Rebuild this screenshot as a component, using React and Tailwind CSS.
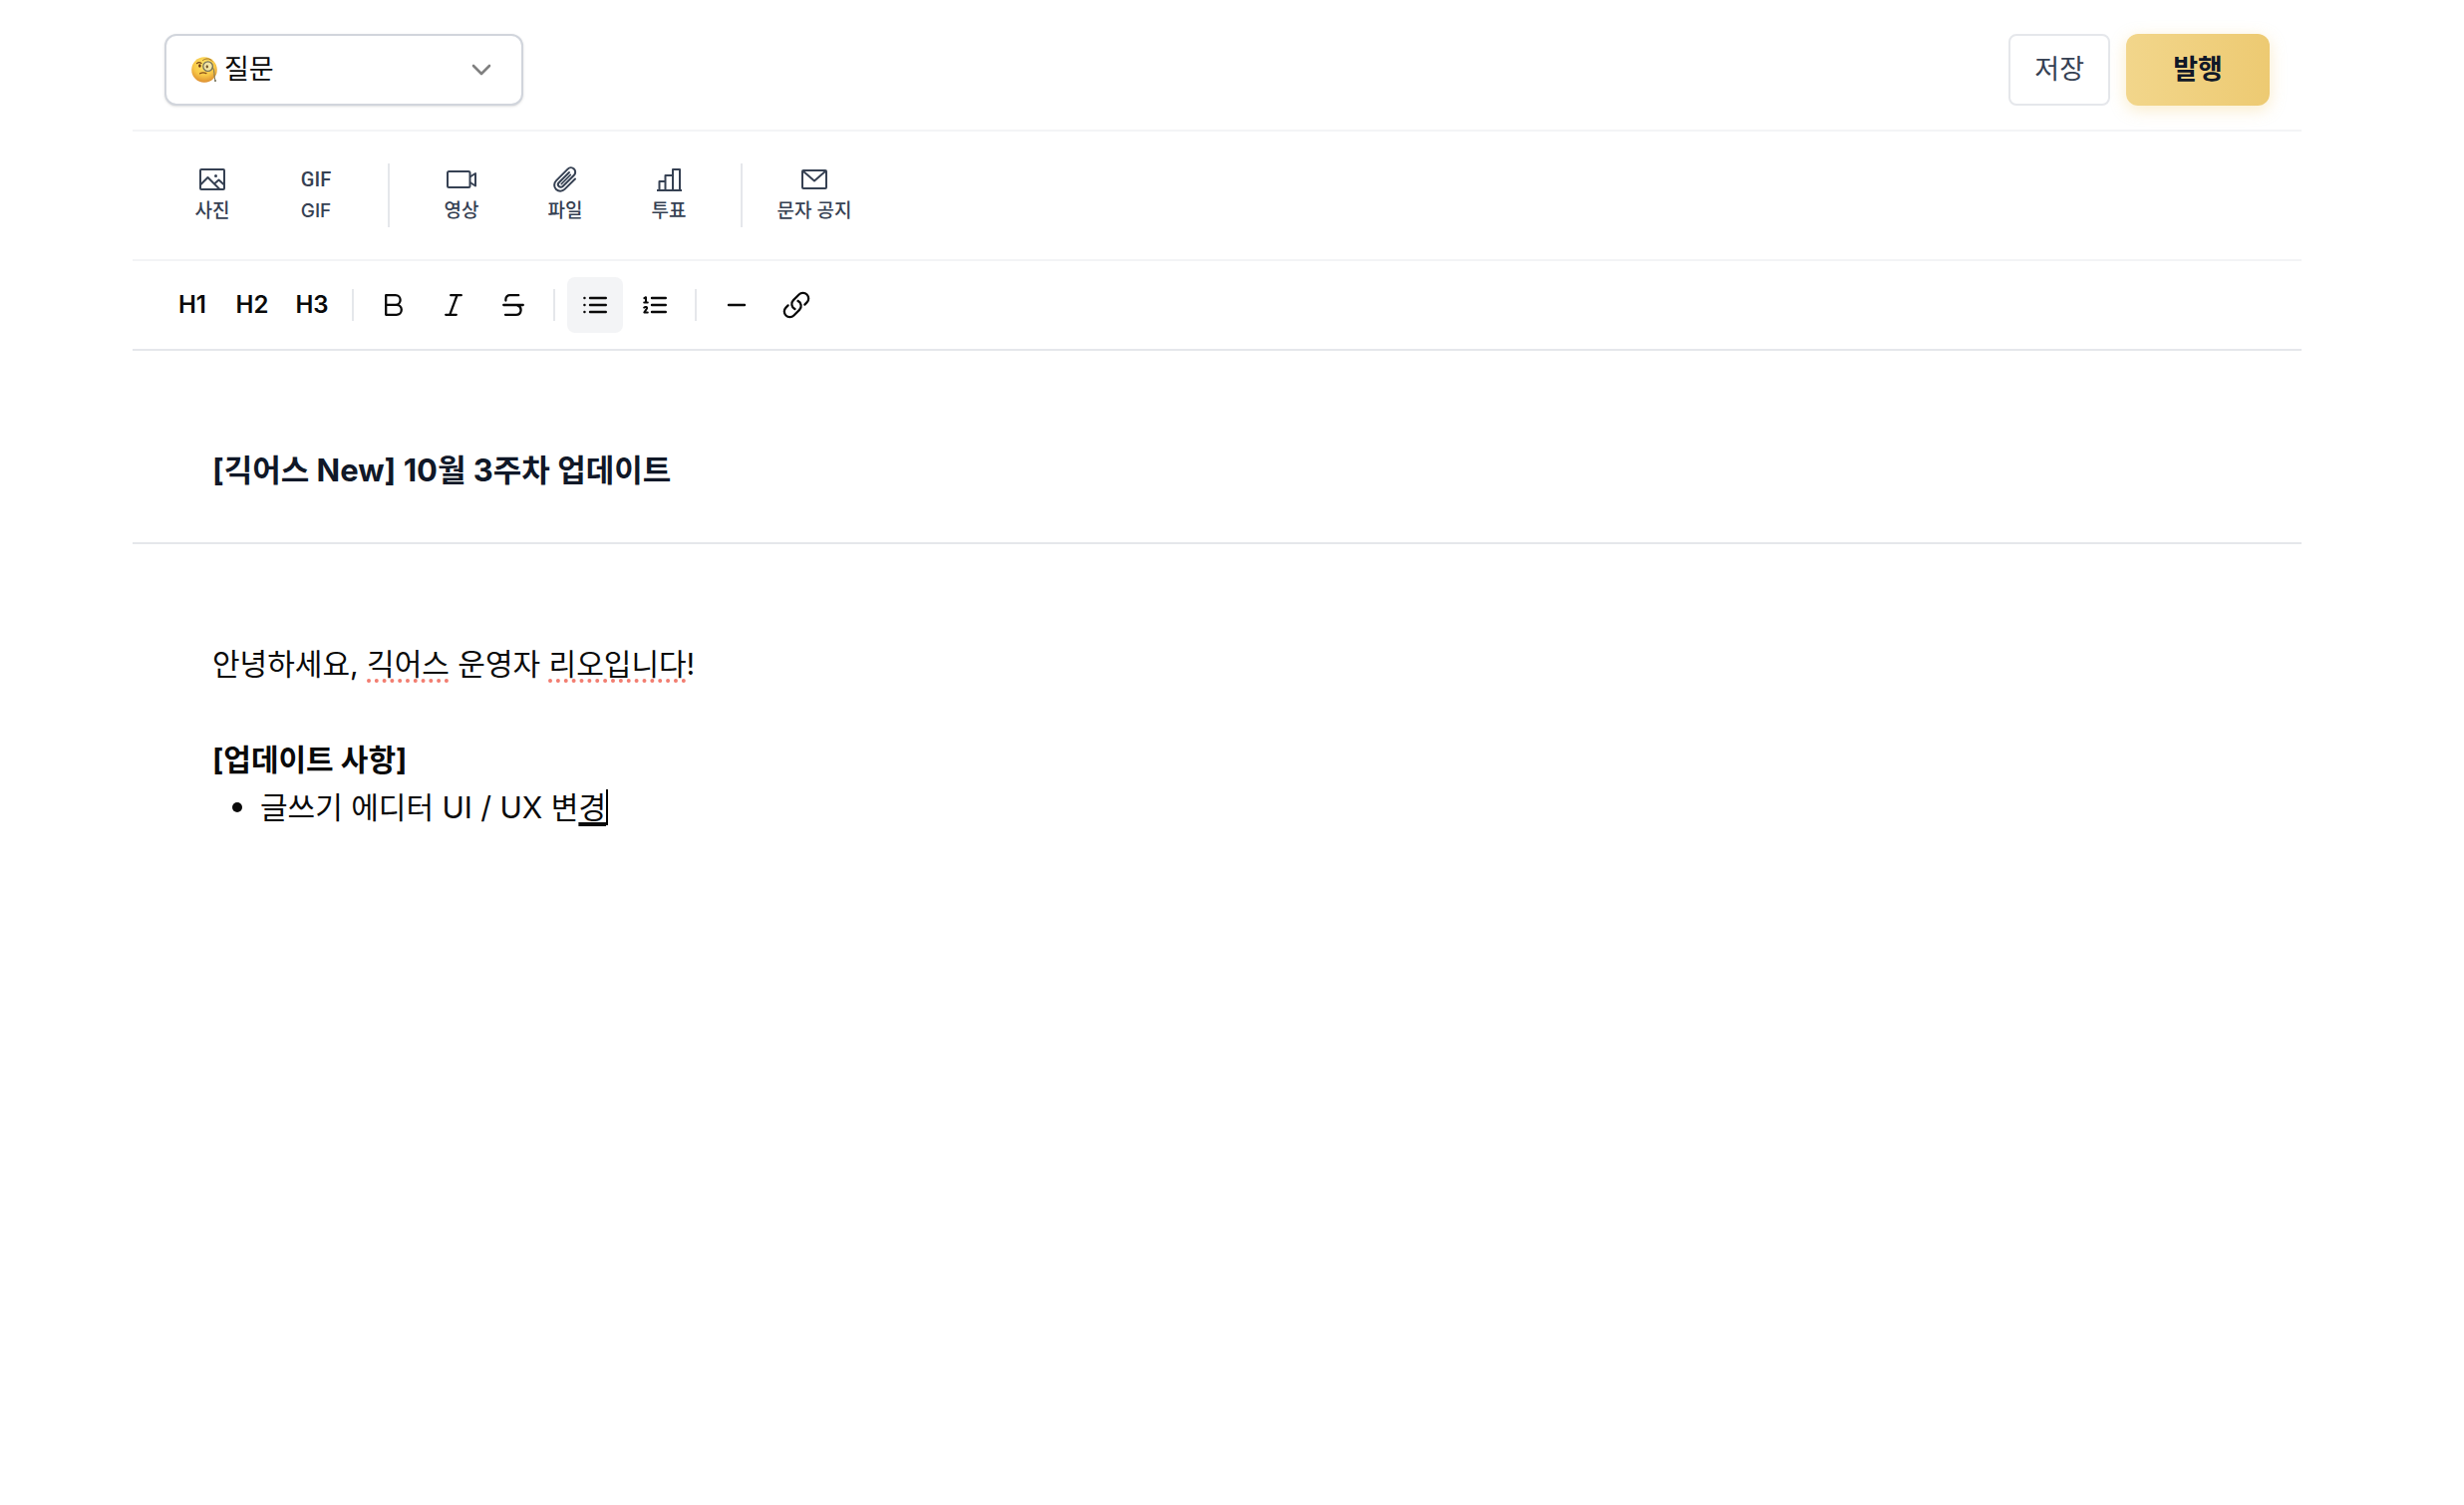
import { useState } from 'react'

const PhotoIcon = () => (
  <svg width="26" height="22" viewBox="0 0 26 22" fill="none" stroke="currentColor" strokeWidth="2" strokeLinejoin="round">
    <rect x="1" y="1" width="24" height="20" rx="1" />
    <path d="M1 16.5 8.5 9 20.5 21M15 15.5l4.5-4 5.5 5" />
    <circle cx="16.5" cy="7.5" r="1.5" fill="currentColor" stroke="none" />
  </svg>
)

const GifIcon = () => (
  <span aria-hidden="true" className="font-[Roboto,sans-serif] text-xl leading-6 font-medium">
    GIF
  </span>
)

const VideoIcon = () => (
  <svg width="30" height="18" viewBox="0 0 30 18" fill="none" stroke="currentColor" strokeWidth="2" strokeLinejoin="round">
    <rect x="1" y="1" width="22.5" height="16" rx="1.5" />
    <path d="M23.5 6.5 29 3v12.5l-5.5-3.5" />
  </svg>
)

const ClipIcon = () => (
  <svg width="24" height="26" viewBox="0 0 24 26" fill="none" stroke="currentColor" strokeWidth="2" strokeLinecap="round">
    <path d="M22 12.5 11.5 22.9a6 6 0 0 1-8.6-8.5L14.6 2.6a4.4 4.4 0 0 1 6.3 6.2L9.6 20a2.7 2.7 0 0 1-3.9-3.8L16 6" />
    <path d="m8.2 17.6 9.2-9.2" strokeWidth="1.5" />
  </svg>
)

const PollIcon = () => (
  <svg width="25" height="23" viewBox="0 0 25 23" fill="none" stroke="currentColor" strokeWidth="2" strokeLinejoin="round">
    <path d="M0 22h25M2.5 22v-9H8.5M8.5 22V7H16M16 22V1h7v21" />
  </svg>
)

const MailIcon = () => (
  <svg width="26" height="20" viewBox="0 0 26 20" fill="none" stroke="currentColor" strokeWidth="2" strokeLinejoin="round">
    <rect x="1" y="1" width="24" height="18" rx="1" />
    <path d="m1.5 1.5 11.5 10 11.5-10" />
  </svg>
)

const BoldIcon = () => (
  <svg width="18" height="22" viewBox="0 0 18 22" fill="none" stroke="currentColor" strokeWidth="2.3" strokeLinejoin="round">
    <path d="M1.2 1.2h9.6a4.8 4.8 0 0 1 0 9.6H1.2zM1.2 10.8h10.6a5 5 0 0 1 0 10H1.2z" />
  </svg>
)

const ItalicIcon = () => (
  <svg width="18" height="22" viewBox="0 0 18 22" fill="none" stroke="currentColor" strokeWidth="2.3" strokeLinecap="round">
    <path d="M6.2 1.2H16.8M1.2 20.8h10.6M12.6 1.2 5.2 20.8" />
  </svg>
)

const StrikeIcon = () => (
  <svg width="22" height="22" viewBox="0 0 22 22" fill="none" stroke="currentColor" strokeWidth="2.3" strokeLinecap="round">
    <path d="M16.2 1.2H7.4a4 4 0 0 0-4 4v1.4M1.2 11h19.6M15 11.4c5.2 1.4 4.6 9.4-1.2 9.4H3" />
  </svg>
)

const BulletListIcon = () => (
  <svg width="24" height="18" viewBox="0 0 24 18" fill="none" stroke="currentColor" strokeWidth="2.4" strokeLinecap="round">
    <path d="M7 2h15.8M7 9h15.8M7 16h15.8M1.4 2h.1M1.4 9h.1M1.4 16h.1" />
  </svg>
)

const OrderedListIcon = () => (
  <svg width="24" height="18" viewBox="0 0 24 18" fill="none" stroke="currentColor" strokeWidth="2.4" strokeLinecap="round">
    <path d="M9 2h13.8M9 9h13.8M9 16h13.8" />
    <path d="M1.4 2.2 3 1.2v5.4M1.2 6.6h3.6M1.2 11.6c1-1.2 3.4-.8 2.8.9L1.4 16.4h3.4" strokeWidth="2" strokeLinejoin="round" />
  </svg>
)

const LineIcon = () => (
  <svg width="20" height="4" viewBox="0 0 20 4" stroke="currentColor" strokeWidth="2.4" strokeLinecap="round">
    <path d="M2 2h16" />
  </svg>
)

const LinkIcon = () => (
  <svg width="30" height="30" viewBox="0 0 24 24" fill="none" stroke="currentColor" strokeWidth="1.8" strokeLinecap="round">
    <path d="M13.19 8.688a4.5 4.5 0 0 1 1.242 7.244l-4.5 4.5a4.5 4.5 0 0 1-6.364-6.364l1.757-1.757m13.35-.622 1.757-1.757a4.5 4.5 0 0 0-6.364-6.364l-4.5 4.5a4.5 4.5 0 0 0 1.242 7.244" />
  </svg>
)

const MonocleIcon = () => (
  <svg width="26" height="26" viewBox="0 0 26 26" fill="none">
    <defs>
      <radialGradient id="face" cx="0.5" cy="0.3" r="0.7">
        <stop offset="0" stopColor="#fde66a" />
        <stop offset="0.6" stopColor="#f8c848" />
        <stop offset="1" stopColor="#de8f30" />
      </radialGradient>
    </defs>
    <circle cx="13" cy="13" r="12.8" fill="url(#face)" />
    <path d="M5.5 6.6c1.3-1.2 3.2-1.2 4.6-.2" stroke="#7a4516" strokeWidth="1.2" strokeLinecap="round" />
    <path d="M11.5 3.6c2.6-2.4 7-2.4 9.4.6" stroke="#9a6420" strokeWidth="0.9" strokeLinecap="round" />
    <ellipse cx="8.4" cy="9" rx="1.3" ry="1.7" fill="#68300f" />
    <circle cx="16.6" cy="9.6" r="4.8" fill="#f3e6a5" stroke="#77745c" strokeWidth="1.3" />
    <ellipse cx="15.8" cy="9.8" rx="1.2" ry="1.6" fill="#75562a" />
    <path d="M8.6 16.8c2-1.3 4.4-1.2 6.4-.2" stroke="#8a5018" strokeWidth="1.2" strokeLinecap="round" />
    <path d="M21.4 10.5c2.6 3.5.6 8 2.6 13.5" stroke="#77745c" strokeWidth="1" strokeLinecap="round" />
    <circle cx="24" cy="24" r="1" fill="#77745c" />
  </svg>
)

const insertGroups = [
  [
    { label: '사진', icon: PhotoIcon },
    { label: 'GIF', icon: GifIcon },
  ],
  [
    { label: '영상', icon: VideoIcon },
    { label: '파일', icon: ClipIcon },
    { label: '투표', icon: PollIcon },
  ],
  [{ label: '문자 공지', icon: MailIcon }],
]

const formatGroups = [
  [
    { name: 'H1', text: 'H1' },
    { name: 'H2', text: 'H2' },
    { name: 'H3', text: 'H3' },
  ],
  [
    { name: '굵게', icon: BoldIcon },
    { name: '기울임', icon: ItalicIcon },
    { name: '취소선', icon: StrikeIcon },
  ],
  [
    { name: '글머리 기호', icon: BulletListIcon },
    { name: '번호 목록', icon: OrderedListIcon },
  ],
  [
    { name: '구분선', icon: LineIcon },
    { name: '링크', icon: LinkIcon },
  ],
]

const InsertButton = ({ label, icon: Icon }) => (
  <button type="button" className="flex w-24 flex-col items-center gap-1 pb-1 text-gray-700">
    <span className="flex h-8 items-center justify-center">
      <Icon />
    </span>
    <span className="text-[19px] leading-6 font-medium whitespace-nowrap">{label}</span>
  </button>
)

const FormatButton = ({ name, text, icon: Icon, active, onClick }) => (
  <button
    type="button"
    aria-label={name}
    aria-pressed={active}
    onClick={onClick}
    className={`flex size-14 items-center justify-center rounded-lg text-2xl font-semibold ${active ? 'bg-gray-100' : ''}`}
  >
    {text || <Icon />}
  </button>
)

const Header = () => (
  <header className="flex items-center justify-between border-b-2 border-gray-100 px-8 py-6">
    <div className="relative">
      <select
        aria-label="게시판"
        className="h-18 w-[360px] appearance-none rounded-xl border-2 border-gray-300 bg-white pr-16 pl-[58px] text-[27px] shadow-sm"
      >
        <option>질문</option>
      </select>
      <span className="pointer-events-none absolute inset-y-0 left-[27px] flex items-center">
        <MonocleIcon />
      </span>
      <span className="pointer-events-none absolute inset-y-0 right-8 flex items-center text-[#808080]">
        <svg width="20" height="12" viewBox="0 0 20 12" fill="none" stroke="currentColor" strokeWidth="2.6" strokeLinecap="round" strokeLinejoin="round">
          <path d="m2 2 8 8 8-8" />
        </svg>
      </span>
    </div>
    <div className="flex gap-4">
      <button type="button" className="h-18 rounded-lg border-2 border-gray-200 px-6 text-[27px] text-gray-700">
        저장
      </button>
      <button
        type="button"
        className="h-18 w-36 rounded-xl bg-linear-to-r from-[#f2d68b] to-[#edca72] text-[27px] font-bold text-gray-900 shadow-[0_4px_16px_rgba(240,200,100,0.35)]"
      >
        발행
      </button>
    </div>
  </header>
)

const InsertToolbar = () => (
  <div className="flex items-center gap-6 border-b-2 border-gray-100 px-8 py-8">
    {insertGroups.map((group, i) => (
      <div key={i} className="flex items-center gap-6">
        {i > 0 && <div className="h-16 w-0.5 bg-gray-200" />}
        <div className="flex gap-2">
          {group.map((item) => (
            <InsertButton key={item.label} {...item} />
          ))}
        </div>
      </div>
    ))}
  </div>
)

const FormatToolbar = () => {
  const [active, setActive] = useState('글머리 기호')

  return (
    <div className="flex items-center gap-3 border-b-2 border-gray-200 px-8 py-4">
      {formatGroups.map((group, i) => (
        <div key={i} className="flex items-center gap-3">
          {i > 0 && <div className="h-8 w-0.5 bg-gray-200" />}
          <div className="flex gap-1">
            {group.map((item) => (
              <FormatButton
                key={item.name}
                {...item}
                active={active === item.name}
                onClick={() => setActive(item.name)}
              />
            ))}
          </div>
        </div>
      ))}
    </div>
  )
}

const Misspelled = ({ children }) => (
  <span className="underline decoration-[#f27d70] decoration-dotted decoration-4 underline-offset-4 [text-decoration-skip-ink:none]">
    {children}
  </span>
)

const Body = () => (
  <div
    role="textbox"
    aria-label="본문"
    aria-multiline="true"
    contentEditable
    suppressContentEditableWarning
    spellCheck={false}
    className="px-20 py-24 text-[30px] leading-12 outline-none"
  >
    <p>
      안녕하세요, <Misspelled>긱어스</Misspelled> 운영자 <Misspelled>리오입니다</Misspelled>!
    </p>
    <p>
      <br />
    </p>
    <p className="font-bold">[업데이트 사항]</p>
    <ul>
      <li className="flex items-center pl-5 before:mr-[18px] before:size-2.5 before:rounded-full before:bg-current">
        <span>
          글쓰기 에디터 UI / UX 변
          <span className="underline decoration-4 underline-offset-4 [text-decoration-skip-ink:none]">경</span>
        </span>
        {/* caret */}
        <span className="h-9 w-0.5 bg-black" />
      </li>
    </ul>
  </div>
)

const App = () => {
  return (
    <div className="min-h-screen bg-white pt-2.5 pr-[30px] font-[Inter,'Noto_Sans_CJK_KR',sans-serif] text-neutral-950">
      <main className="mx-auto max-w-[2176px]">
        <Header />
        <InsertToolbar />
        <FormatToolbar />
        <div className="border-b-2 border-gray-200 px-20 pt-24 pb-12">
          <input
            type="text"
            aria-label="제목"
            defaultValue="[긱어스 New] 10월 3주차 업데이트"
            className="block h-12 w-full text-[31px] leading-12 font-bold text-gray-900 outline-none"
          />
        </div>
        <Body />
      </main>
    </div>
  )
}

export default App
